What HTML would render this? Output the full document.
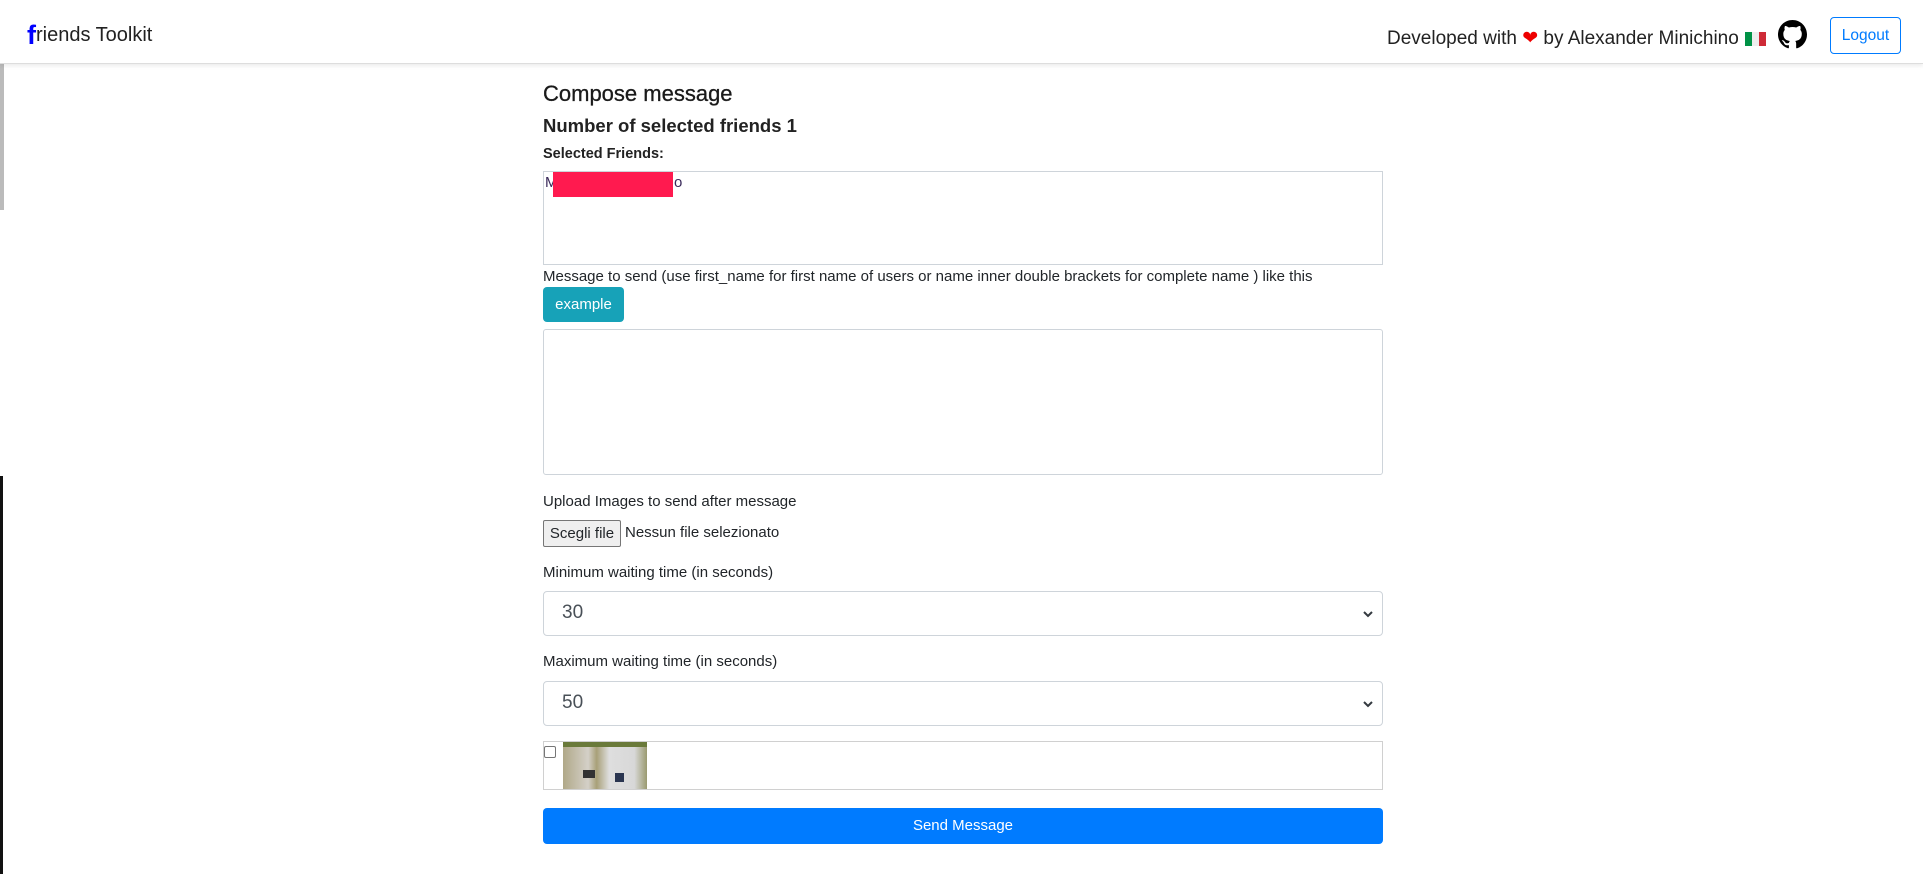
<!DOCTYPE html>
<html><head><meta charset="utf-8"><style>
*{box-sizing:border-box;margin:0;padding:0}
body{width:1923px;height:874px;background:#fff;font-family:"Liberation Sans",sans-serif;color:#212529;position:relative;overflow:hidden}
.a{position:absolute;white-space:nowrap}
.box{position:absolute;border:1px solid #ced4da;background:#fff}
nav{position:absolute;left:0;top:0;width:1923px;height:64px;border-bottom:1px solid #ddd;box-shadow:0 2px 4px rgba(0,0,0,.08);background:#fff}
.lbl{font-size:15px}
.sel{position:absolute;left:543px;width:840px;height:45px;border:1px solid #ced4da;border-radius:4px;font-size:19px;color:#495057;padding:10px 0 0 18px}
.sel svg{position:absolute;right:8px;top:17px}
</style></head><body>
<div class="a" style="left:0;top:0;width:4px;height:210px;background:#bbb"></div>
<div class="a" style="left:0;top:476px;width:3px;height:398px;background:#111"></div>
<nav>
 <div class="a" style="left:27px;top:17px;font-size:20px;color:#222"><span style="color:#0000ff;font-weight:bold;font-size:27px;position:relative;top:3px">f</span>riends Toolkit</div>
 <div class="a" style="left:1387px;top:27px;font-size:19px;color:#222">Developed with <span style="color:#e00">&#10084;</span> by Alexander Minichino</div>
 <div class="a" style="left:1745px;top:32px;width:21px;height:14px;display:flex"><i style="flex:1;background:#009246"></i><i style="flex:1;background:#eee"></i><i style="flex:1;background:#ce2b37"></i></div>
 <svg class="a" style="left:1778px;top:20px" width="29" height="29" viewBox="0 0 16 16"><path fill="#000" d="M8 0C3.58 0 0 3.58 0 8c0 3.540 2.29 6.53 5.47 7.59.4.07.55-.17.55-.38v-1.34c-2.23.48-2.690-1.07-2.69-1.07-.36-.92-.89-1.17-.89-1.17-.73-.5.06-.49.06-.49.8.06 1.23.83 1.230.83.71 1.22 1.87.87 2.33.66.07-.52.28-.87.51-1.07-1.78-.2-3.64-.89-3.64-3.95 0-.87.31-1.59.82-2.15-.08-.2-.36-1.02.08-2.12 0 0 .67-.21 2.2.82.64-.18 1.32-.27 2-.27.68 0 1.36.09 2 .27 1.53-1.04 2.2-.82 2.2-.82.44 1.1.16 1.92.08 2.12.51.56.82 1.27.82 2.15 0 3.07-1.87 3.75-3.65 3.95.29.25.54.73.54 1.48v2.2c0 .21.15.46.55.38A8.013 8.013 0 0016 8c0-4.42-3.58-8-8-8z"/></svg>
 <div class="a" style="left:1830px;top:17px;width:71px;height:37px;border:1px solid #007bff;border-radius:4px;color:#007bff;font-size:15.5px;text-align:center;line-height:35px">Logout</div>
</nav>
<div class="a" style="left:543px;top:81px;font-size:22px;color:#1a1a1a;-webkit-text-stroke:0.3px #1a1a1a">Compose message</div>
<div class="a" style="left:543px;top:115px;font-size:18.5px;font-weight:bold;color:#222">Number of selected friends 1</div>
<div class="a" style="left:543px;top:146px;font-size:14.5px;font-weight:bold;color:#222">Selected Friends:</div>
<div class="box" style="left:543px;top:171px;width:840px;height:94px"></div>
<div class="a" style="left:545px;top:174px;font-size:15px;color:#3a2a5a">M</div>
<div class="a" style="left:553px;top:172px;width:120px;height:25px;background:#ff1a4f"></div>
<div class="a" style="left:674px;top:174px;font-size:15px;color:#3a2a5a">o</div>
<div class="a lbl" style="left:543px;top:268px">Message to send (use first_name for first name of users or name inner double brackets for complete name ) like this</div>
<div class="a" style="left:543px;top:287px;width:81px;height:35px;background:#17a2b8;border-radius:4px;color:#fff;font-size:15px;text-align:center;line-height:35px">example</div>
<div class="box" style="left:543px;top:329px;width:840px;height:146px;border-radius:3px"></div>
<div class="a lbl" style="left:543px;top:493px">Upload Images to send after message</div>
<div class="a" style="left:543px;top:520px;width:78px;height:27px;background:#efefef;border:1px solid #767676;border-radius:2px;font-size:15px;line-height:25px;text-align:center">Scegli file</div>
<div class="a lbl" style="left:625px;top:524px">Nessun file selezionato</div>
<div class="a lbl" style="left:543px;top:564px">Minimum waiting time (in seconds)</div>
<div class="sel" style="top:591px">30<svg width="12" height="10" viewBox="0 0 12 10"><path d="M2 3l4 4 4-4" stroke="#343a40" stroke-width="2" fill="none"/></svg></div>
<div class="a lbl" style="left:543px;top:653px">Maximum waiting time (in seconds)</div>
<div class="sel" style="top:681px">50<svg width="12" height="10" viewBox="0 0 12 10"><path d="M2 3l4 4 4-4" stroke="#343a40" stroke-width="2" fill="none"/></svg></div>
<div class="box" style="left:543px;top:741px;width:840px;height:49px;border-color:#d0d0d0"></div>
<div class="a" style="left:544px;top:746px;width:12px;height:12px;border:1px solid #767676;border-radius:2px"></div>
<div class="a" style="left:563px;top:742px;width:84px;height:47px;background:linear-gradient(90deg,#b0a888 0%,#d4d0c8 30%,#a8a078 40%,#dedede 55%,#d8d8d8 85%,#9a9a70 100%)"><i style="position:absolute;left:0;top:0;width:84px;height:5px;background:#6a7a3a"></i><i style="position:absolute;left:20px;top:28px;width:12px;height:8px;background:#333"></i><i style="position:absolute;left:52px;top:31px;width:9px;height:9px;background:#2a3550"></i></div>
<div class="a" style="left:543px;top:808px;width:840px;height:36px;background:#007bff;border-radius:4px;color:#fff;font-size:15px;text-align:center;line-height:36px">Send Message</div>
</body></html>
